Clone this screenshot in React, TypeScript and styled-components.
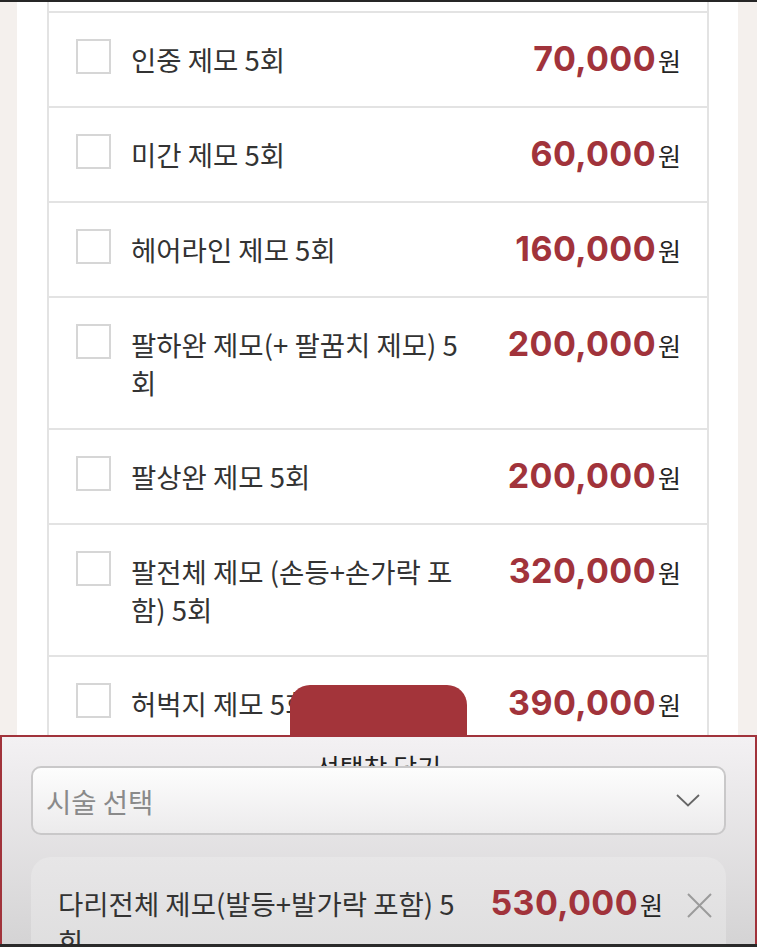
import React from 'react'
import styled, { createGlobalStyle } from 'styled-components'

const GlobalStyle = createGlobalStyle`
  html, body {
    margin: 0;
    padding: 0;
  }
  body {
    width: 757px;
    height: 947px;
    overflow: hidden;
    font-family: 'Noto Sans CJK KR', 'Noto Sans', sans-serif;
    color: #2b2b2b;
  }
`

const Screen = styled.div`
  position: relative;
  height: 947px;
  overflow: hidden;
  background: #f4f0ed;
  display: flex;
  flex-direction: column;
`

const TopEdge = styled.div`
  height: 2px;
  background: #262626;
  flex-shrink: 0;
`

const Page = styled.div`
  flex: 1;
  margin: 0 19px 0 17px;
  padding: 0 29px 0 30px;
  background: #fff;
`

const List = styled.div`
  border-left: 2px solid #e3e3e3;
  border-right: 2px solid #e3e3e3;
`

const Stub = styled.div`
  height: 9px;
  border-bottom: 2px solid #e3e3e3;
`

const Row = styled.div`
  display: flex;
  align-items: flex-start;
  padding: 26px 26px 27px 27px;
  border-bottom: 2px solid #e3e3e3;
`

const Check = styled.span`
  flex-shrink: 0;
  width: 31px;
  height: 31px;
  border: 2px solid #d6d6d6;
  margin-right: 20px;
`

const Name = styled.div<{ $width: number }>`
  flex: 0 0 ${(p) => p.$width}px;
  padding-top: 1px;
  font-size: 27.5px;
  line-height: 38px;
  color: #333;
`

const Price = styled.div`
  flex-shrink: 0;
  display: flex;
  align-items: baseline;
  margin-left: auto;
  padding-top: 1px;
  line-height: 38px;
`

const Amount = styled.span`
  font-family: Inter, 'Liberation Sans', sans-serif;
  font-weight: 700;
  font-size: 34px;
  letter-spacing: 0.4px;
  color: #a1333b;
`

const Won = styled.span`
  font-size: 25px;
  color: #242424;
  margin-left: 2px;
`

const Sheet = styled.div`
  position: absolute;
  left: 0;
  right: 0;
  top: 735px;
  bottom: 0;
  border: 2px solid #a1333b;
  border-bottom: none;
  background: linear-gradient(#f3f1f3, #d4d3d4);
  padding: 0 29px;
`

const Tab = styled.div`
  position: absolute;
  top: -52px;
  left: 288px;
  width: 177px;
  height: 50px;
  border-radius: 20px 20px 0 0;
  background: #a3343a;
`

const SheetTitle = styled.div`
  height: 29px;
  overflow: hidden;
  text-align: center;
  font-size: 26px;
  line-height: 26px;
  padding-top: 17px;
  box-sizing: border-box;
  color: #222;
`

const Select = styled.div`
  display: flex;
  align-items: center;
  justify-content: space-between;
  height: 65px;
  padding: 0 24px 0 13px;
  border: 2px solid #c9c8c9;
  border-radius: 10px;
  background: linear-gradient(#fdfdfd, #ecebec);
`

const Placeholder = styled.span`
  font-size: 27.5px;
  color: #8a8a8a;
`

const Picked = styled.div`
  display: flex;
  align-items: flex-start;
  margin-top: 22px;
  padding: 26px 14px 20px 27px;
  border-radius: 20px;
  background: linear-gradient(#e7e6e7, #d1d1d1);
  height: 200px;
`

const CloseBtn = styled.span`
  flex-shrink: 0;
  margin: 10px 0 0 24px;
  display: flex;
`

const BottomEdge = styled.div`
  position: absolute;
  left: 0;
  right: 0;
  bottom: 0;
  height: 3px;
  background: #2a2a2a;
`

interface Item {
  name: string
  price: string
}

const items: Item[] = [
  { name: '인중 제모 5회', price: '70,000' },
  { name: '미간 제모 5회', price: '60,000' },
  { name: '헤어라인 제모 5회', price: '160,000' },
  { name: '팔하완 제모(+ 팔꿈치 제모) 5회', price: '200,000' },
  { name: '팔상완 제모 5회', price: '200,000' },
  { name: '팔전체 제모 (손등+손가락 포함) 5회', price: '320,000' },
  { name: '허벅지 제모 5회', price: '390,000' },
]

const Chevron = () => (
  <svg width="24" height="13" viewBox="0 0 24 13" fill="none">
    <polyline points="1,1 12,11.5 23,1" stroke="#666" strokeWidth="1.8" />
  </svg>
)

const Cross = () => (
  <svg width="25" height="25" viewBox="0 0 25 25" fill="none">
    <path d="M1 1 L24 24 M24 1 L1 24" stroke="#9b9b9b" strokeWidth="2" />
  </svg>
)

const PriceTag = ({ value }: { value: string }) => (
  <Price>
    <Amount>{value}</Amount>
    <Won>원</Won>
  </Price>
)

const App = () => (
  <>
    <GlobalStyle />
    <Screen>
      <TopEdge />
      <Page>
        <List>
          <Stub />
          {items.map((item, i) => (
            <Row key={i}>
              <Check />
              <Name $width={338}>{item.name}</Name>
              <PriceTag value={item.price} />
            </Row>
          ))}
        </List>
      </Page>
      <Sheet>
        <Tab />
        <SheetTitle>선택창 닫기</SheetTitle>
        <Select>
          <Placeholder>시술 선택</Placeholder>
          <Chevron />
        </Select>
        <Picked>
          <Name $width={408}>다리전체 제모(발등+발가락 포함) 5회</Name>
          <PriceTag value="530,000" />
          <CloseBtn>
            <Cross />
          </CloseBtn>
        </Picked>
      </Sheet>
      <BottomEdge />
    </Screen>
  </>
)

export default App
